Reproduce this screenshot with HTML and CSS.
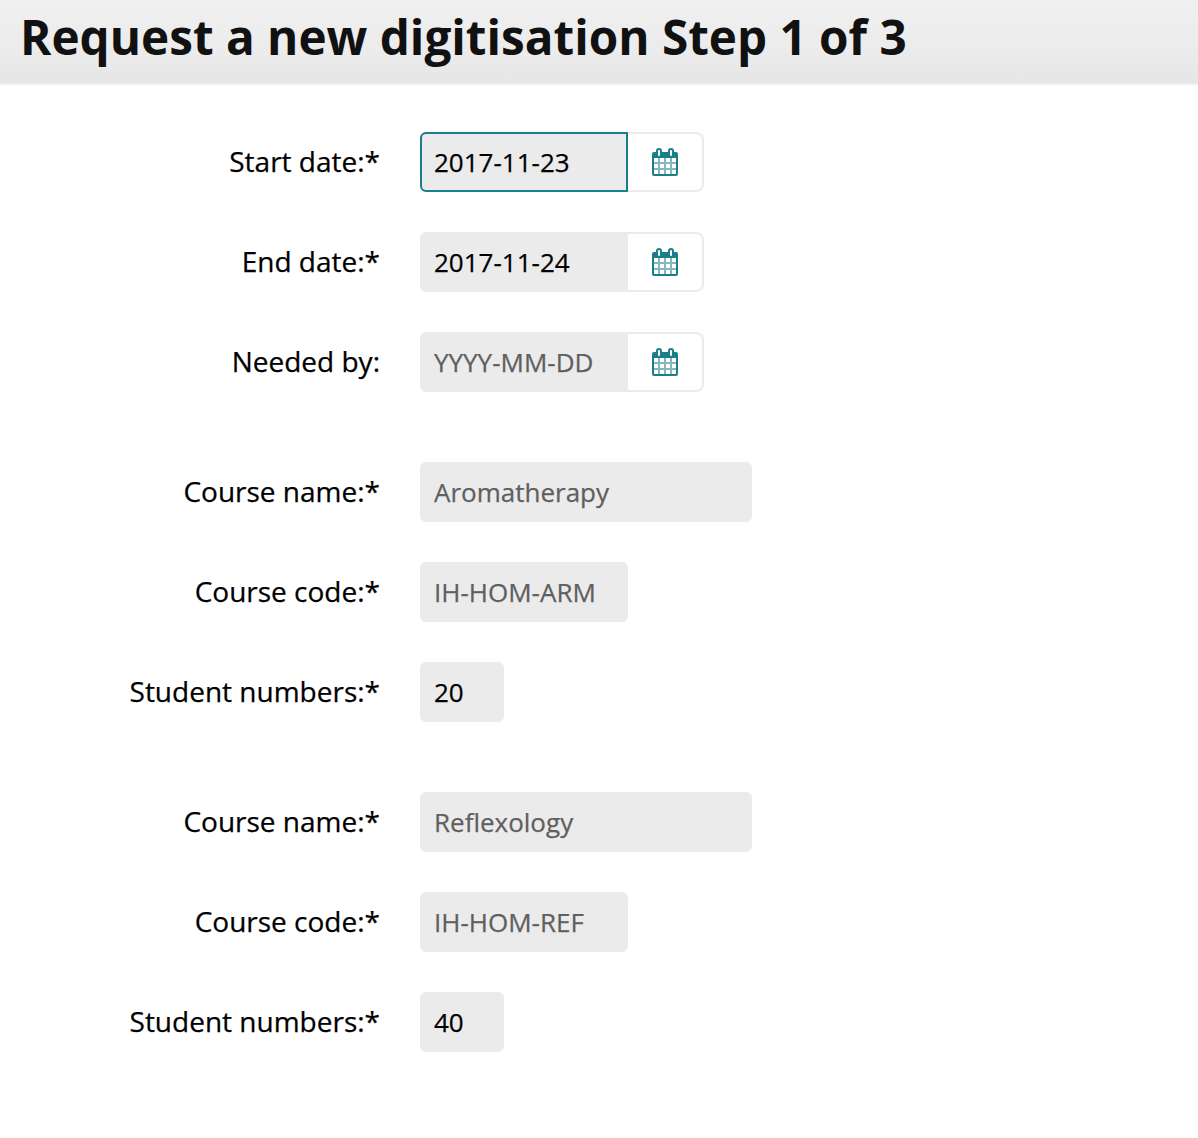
FILE: index.html
```html
<!DOCTYPE html>
<html lang="en">
<head>
    <meta charset="UTF-8">
    <meta name="viewport" content="width=device-width, initial-scale=1.0">
    <title>Request a new digitisation</title>
    <link rel="stylesheet" href="styles.css">
</head>
<body>
    <svg class="sprite">
        <symbol id="calendar" viewBox="0 0 26 28">
            <path fill-rule="evenodd" d="M4 4H2a2 2 0 0 0-2 2v20a2 2 0 0 0 2 2h22a2 2 0 0 0 2-2V6a2 2 0 0 0-2-2h-2V3a3 3 0 0 0-6 0v1h-6V3a3 3 0 0 0-6 0zM2 10h22v16H2zM6 3a1 1 0 0 1 2 0v4a1 1 0 0 1-2 0zM18 3a1 1 0 0 1 2 0v4a1 1 0 0 1-2 0z"/>
            <path opacity=".55" d="M6 10h2v16H6zM12 10h2v16h-2zM18 10h2v16h-2zM2 14h22v2H2zM2 20h22v2H2z"/>
        </symbol>
    </svg>

    <header class="header">
        <h1>Request a new digitisation Step 1 of 3</h1>
    </header>

    <form class="request-form">
        <fieldset>
            <div class="form-group">
                <label for="startDate">Start date:*</label>
                <input type="text" id="startDate" class="medium active" value="2017-11-23">
                <button type="button" class="date-btn" aria-label="Pick start date"><svg><use href="#calendar"/></svg></button>
            </div>
            <div class="form-group">
                <label for="endDate">End date:*</label>
                <input type="text" id="endDate" class="medium" value="2017-11-24">
                <button type="button" class="date-btn" aria-label="Pick end date"><svg><use href="#calendar"/></svg></button>
            </div>
            <div class="form-group">
                <label for="neededBy">Needed by:</label>
                <input type="text" id="neededBy" class="medium" placeholder="YYYY-MM-DD">
                <button type="button" class="date-btn" aria-label="Pick needed by date"><svg><use href="#calendar"/></svg></button>
            </div>
        </fieldset>

        <fieldset>
            <div class="form-group">
                <label for="courseName1">Course name:*</label>
                <input type="text" id="courseName1" class="large" value="Aromatherapy" disabled>
            </div>
            <div class="form-group">
                <label for="courseCode1">Course code:*</label>
                <input type="text" id="courseCode1" class="medium" value="IH-HOM-ARM" disabled>
            </div>
            <div class="form-group">
                <label for="students1">Student numbers:*</label>
                <input type="text" id="students1" class="small" value="20">
            </div>
        </fieldset>

        <fieldset>
            <div class="form-group">
                <label for="courseName2">Course name:*</label>
                <input type="text" id="courseName2" class="large" value="Reflexology" disabled>
            </div>
            <div class="form-group">
                <label for="courseCode2">Course code:*</label>
                <input type="text" id="courseCode2" class="medium" value="IH-HOM-REF" disabled>
            </div>
            <div class="form-group">
                <label for="students2">Student numbers:*</label>
                <input type="text" id="students2" class="small" value="40">
            </div>
        </fieldset>
    </form>
</body>
</html>
```
FILE: styles.css
```css
:root {
    --primary-color: #1a7f89;
    --field-color: #ebebeb;
    --muted-color: #5f5f5f;
}

body {
    margin: 0;
    background: #fff;
    color: #000;
    font-family: 'Open Sans', sans-serif;
}

.sprite {
    display: none;
}

.header {
    height: 86px;
    box-sizing: border-box;
    padding: 4px 20px 0;
    background: linear-gradient(#f0f0f0, #ebebeb 65%, #e6e6e6 96%, #fff);
}

.header h1 {
    margin: 0;
    color: #111;
    font-size: 47.65px;
    font-weight: 700;
    line-height: 66px;
    white-space: nowrap;
}

.request-form {
    padding-top: 46px;
}

fieldset {
    display: flex;
    flex-direction: column;
    gap: 40px;
    margin: 0 0 70px;
    padding: 0;
    border: none;
}

.form-group {
    display: flex;
    height: 60px;
    -webkit-text-stroke-width: 0.25px;
}

.form-group label {
    width: 380px;
    margin-right: 40px;
    font-size: 28px;
    line-height: 58px;
    text-align: right;
}

.form-group input {
    box-sizing: border-box;
    height: 60px;
    padding: 0 12px;
    border: 2px solid var(--field-color);
    border-radius: 6px;
    background: var(--field-color);
    color: #000;
    font-family: 'Open Sans', sans-serif;
    font-size: 26px;
    outline: none;
}

.form-group input::placeholder,
.form-group input:disabled {
    color: var(--muted-color);
    opacity: 1;
}

.form-group input.small {
    width: 84px;
}

.form-group input.medium {
    width: 208px;
}

.form-group input.large {
    width: 332px;
}

.form-group input:not(:last-child) {
    border-radius: 6px 0 0 6px;
}

.form-group input.active {
    border-color: var(--primary-color);
}

.date-btn {
    display: flex;
    align-items: center;
    justify-content: center;
    box-sizing: border-box;
    width: 76px;
    padding: 0;
    border: 2px solid var(--field-color);
    border-left: none;
    border-radius: 0 8px 8px 0;
    background: #fff;
    cursor: pointer;
}

.date-btn svg {
    width: 26px;
    height: 28px;
    fill: var(--primary-color);
}
```
